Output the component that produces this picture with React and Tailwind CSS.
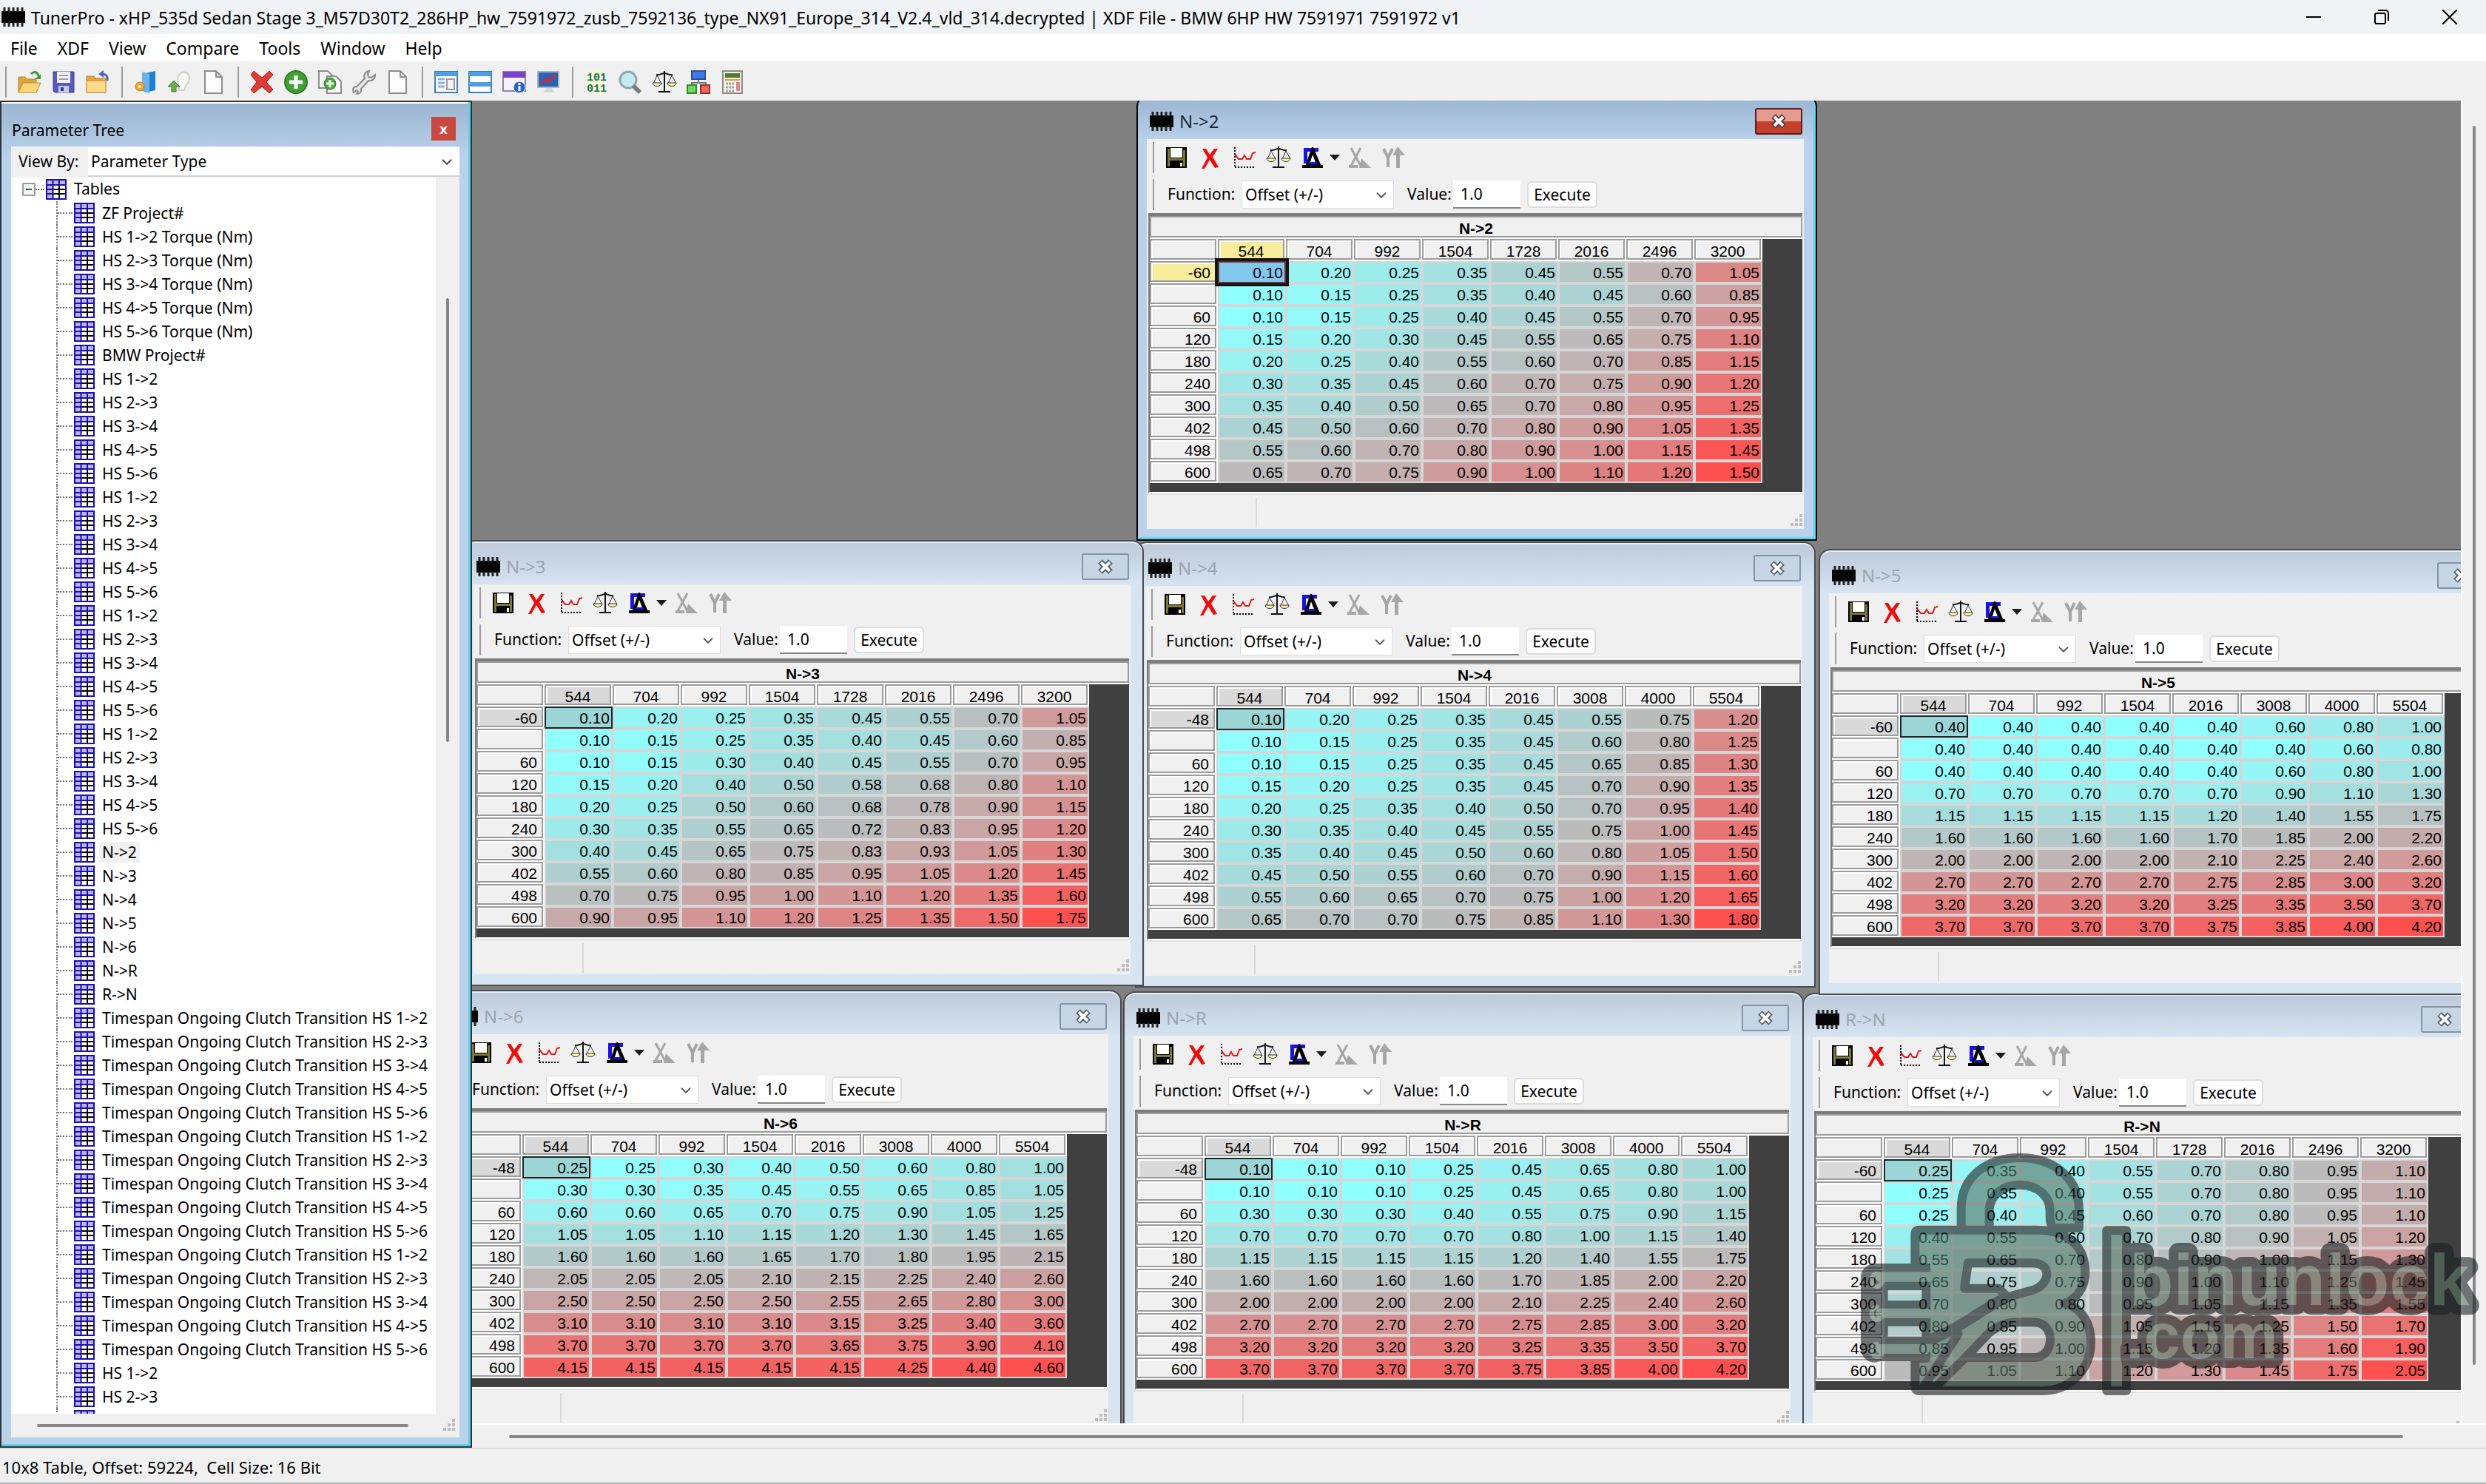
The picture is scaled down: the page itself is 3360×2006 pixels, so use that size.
import React, { useState } from "react";
import { ChevronDown } from "lucide-react";

const RPM_A = [544, 704, 992, 1504, 1728, 2016, 2496, 3200];
const RPM_B = [544, 704, 992, 1504, 2016, 3008, 4000, 5504];
const TORQUE = ["-60", "", "60", "120", "180", "240", "300", "402", "498", "600"];
const TORQUE_48 = ["-48", "", "60", "120", "180", "240", "300", "402", "498", "600"];

// one string per table row
const parseRows = (text) =>
  text
    .trim()
    .split("\n")
    .map((line) => line.trim().split(/\s+/));

// Painted from first to last, so the later ones lie on top
const tables = [
  {
    name: "R->N",
    place: "left-[1798px] top-[1206px]",
    cols: RPM_A,
    rows: TORQUE,
    values: parseRows(`
      0.25 0.35 0.40 0.55 0.70 0.80 0.95 1.10
      0.25 0.35 0.40 0.55 0.70 0.80 0.95 1.10
      0.25 0.40 0.45 0.60 0.70 0.80 0.95 1.10
      0.40 0.55 0.60 0.70 0.80 0.90 1.05 1.20
      0.55 0.65 0.70 0.80 0.90 1.00 1.15 1.30
      0.65 0.75 0.75 0.90 1.00 1.10 1.25 1.45
      0.70 0.80 0.80 0.95 1.05 1.15 1.35 1.55
      0.80 0.85 0.90 1.05 1.15 1.25 1.50 1.70
      0.85 0.95 1.00 1.15 1.20 1.35 1.60 1.90
      0.95 1.05 1.10 1.20 1.30 1.45 1.75 2.05`),
  },
  {
    name: "N->R",
    place: "left-[880px] top-[1204px]",
    cols: RPM_B,
    rows: TORQUE_48,
    values: parseRows(`
      0.10 0.10 0.10 0.25 0.45 0.65 0.80 1.00
      0.10 0.10 0.10 0.25 0.45 0.65 0.80 1.00
      0.30 0.30 0.30 0.40 0.55 0.75 0.90 1.15
      0.70 0.70 0.70 0.70 0.80 1.00 1.15 1.40
      1.15 1.15 1.15 1.15 1.20 1.40 1.55 1.75
      1.60 1.60 1.60 1.60 1.70 1.85 2.00 2.20
      2.00 2.00 2.00 2.00 2.10 2.25 2.40 2.60
      2.70 2.70 2.70 2.70 2.75 2.85 3.00 3.20
      3.20 3.20 3.20 3.20 3.25 3.35 3.50 3.70
      3.70 3.70 3.70 3.70 3.75 3.85 4.00 4.20`),
  },
  {
    name: "N->6",
    place: "left-[-42px] top-[1202px]",
    cols: RPM_B,
    rows: TORQUE_48,
    values: parseRows(`
      0.25 0.25 0.30 0.40 0.50 0.60 0.80 1.00
      0.30 0.30 0.35 0.45 0.55 0.65 0.85 1.05
      0.60 0.60 0.65 0.70 0.75 0.90 1.05 1.25
      1.05 1.05 1.10 1.15 1.20 1.30 1.45 1.65
      1.60 1.60 1.60 1.65 1.70 1.80 1.95 2.15
      2.05 2.05 2.05 2.10 2.15 2.25 2.40 2.60
      2.50 2.50 2.50 2.50 2.55 2.65 2.80 3.00
      3.10 3.10 3.10 3.10 3.15 3.25 3.40 3.60
      3.70 3.70 3.70 3.70 3.65 3.75 3.90 4.10
      4.15 4.15 4.15 4.15 4.15 4.25 4.40 4.60`),
  },
  {
    name: "N->5",
    place: "left-[1820px] top-[606px]",
    cols: RPM_B,
    rows: TORQUE,
    values: parseRows(`
      0.40 0.40 0.40 0.40 0.40 0.60 0.80 1.00
      0.40 0.40 0.40 0.40 0.40 0.40 0.60 0.80
      0.40 0.40 0.40 0.40 0.40 0.60 0.80 1.00
      0.70 0.70 0.70 0.70 0.70 0.90 1.10 1.30
      1.15 1.15 1.15 1.15 1.20 1.40 1.55 1.75
      1.60 1.60 1.60 1.60 1.70 1.85 2.00 2.20
      2.00 2.00 2.00 2.00 2.10 2.25 2.40 2.60
      2.70 2.70 2.70 2.70 2.75 2.85 3.00 3.20
      3.20 3.20 3.20 3.20 3.25 3.35 3.50 3.70
      3.70 3.70 3.70 3.70 3.75 3.85 4.00 4.20`),
  },
  {
    name: "N->4",
    place: "left-[896px] top-[596px]",
    cols: RPM_B,
    rows: TORQUE_48,
    values: parseRows(`
      0.10 0.20 0.25 0.35 0.45 0.55 0.75 1.20
      0.10 0.15 0.25 0.35 0.45 0.60 0.80 1.25
      0.10 0.15 0.25 0.35 0.45 0.65 0.85 1.30
      0.15 0.20 0.25 0.35 0.45 0.70 0.90 1.35
      0.20 0.25 0.35 0.40 0.50 0.70 0.95 1.40
      0.30 0.35 0.40 0.45 0.55 0.75 1.00 1.45
      0.35 0.40 0.45 0.50 0.60 0.80 1.05 1.50
      0.45 0.50 0.55 0.60 0.70 0.90 1.15 1.60
      0.55 0.60 0.65 0.70 0.75 1.00 1.20 1.65
      0.65 0.70 0.70 0.75 0.85 1.10 1.30 1.80`),
  },
  {
    name: "N->3",
    place: "left-[-12px] top-[594px]",
    cols: RPM_A,
    rows: TORQUE,
    values: parseRows(`
      0.10 0.20 0.25 0.35 0.45 0.55 0.70 1.05
      0.10 0.15 0.25 0.35 0.40 0.45 0.60 0.85
      0.10 0.15 0.30 0.40 0.45 0.55 0.70 0.95
      0.15 0.20 0.40 0.50 0.58 0.68 0.80 1.10
      0.20 0.25 0.50 0.60 0.68 0.78 0.90 1.15
      0.30 0.35 0.55 0.65 0.72 0.83 0.95 1.20
      0.40 0.45 0.65 0.75 0.83 0.93 1.05 1.30
      0.55 0.60 0.80 0.85 0.95 1.05 1.20 1.45
      0.70 0.75 0.95 1.00 1.10 1.20 1.35 1.60
      0.90 0.95 1.10 1.20 1.25 1.35 1.50 1.75`),
  },
  {
    name: "N->2",
    active: true,
    place: "left-[898px] top-[-8px]",
    cols: RPM_A,
    rows: TORQUE,
    values: parseRows(`
      0.10 0.20 0.25 0.35 0.45 0.55 0.70 1.05
      0.10 0.15 0.25 0.35 0.40 0.45 0.60 0.85
      0.10 0.15 0.25 0.40 0.45 0.55 0.70 0.95
      0.15 0.20 0.30 0.45 0.55 0.65 0.75 1.10
      0.20 0.25 0.40 0.55 0.60 0.70 0.85 1.15
      0.30 0.35 0.45 0.60 0.70 0.75 0.90 1.20
      0.35 0.40 0.50 0.65 0.70 0.80 0.95 1.25
      0.45 0.50 0.60 0.70 0.80 0.90 1.05 1.35
      0.55 0.60 0.70 0.80 0.90 1.00 1.15 1.45
      0.65 0.70 0.75 0.90 1.00 1.10 1.20 1.50`),
  },
];

const SHIFTS = ["1->2", "2->3", "3->4", "4->5", "5->6"];
const hs = SHIFTS.map((s) => `HS ${s}`);
const timespan = SHIFTS.map((s) => `Timespan Ongoing Clutch Transition HS ${s}`);
const treeItems = [
  "ZF Project#",
  ...SHIFTS.map((s) => `HS ${s} Torque (Nm)`),
  "BMW Project#",
  ...hs,
  ...hs,
  ...hs,
  ...hs,
  "N->2",
  "N->3",
  "N->4",
  "N->5",
  "N->6",
  "N->R",
  "R->N",
  ...timespan,
  ...timespan,
  ...timespan,
  ...hs.slice(0, 2),
  "",
];

// cyan at the lowest value, red at the highest
const heatColor = (value, min, max) => {
  const t = (value - min) / (max - min);
  const r = Math.round(144 + 111 * t);
  const g = Math.round(255 - 175 * t);
  return `rgb(${r}, ${g}, ${g})`;
};

/* ---------- icons ---------- */

const ChipIcon = () => (
  <svg viewBox="0 0 32 26" className="h-[26px] w-8 shrink-0" aria-hidden="true">
    <rect y="5" width="32" height="16" fill="#050505" />
    <path d="M4 0v6M10 0v6M16 0v6M22 0v6M28 0v6M4 20v6M10 20v6M16 20v6M22 20v6M28 20v6" stroke="#222" strokeWidth="3" />
  </svg>
);

const TableIcon = () => (
  <svg viewBox="0 0 28 28" className="size-7 shrink-0" aria-hidden="true">
    <rect x="1" y="1" width="26" height="26" fill="#fff" />
    <path d="M2 2h24v6H2zM2 2h7v24H2z" fill="#b9b5e6" />
    <path d="M10 14h16M10 20h16M18 9v17" stroke="#000" strokeWidth="2" />
    <path d="M1 1h26v26H1zM1 8h26M9.500 1v26M18 1v7M1 14h8M1 20h8" fill="none" stroke="#1a0db8" strokeWidth="2" />
  </svg>
);

const CrossGlyph = ({ dark }) => (
  <svg viewBox="0 0 24 20" className="h-5 w-6" aria-hidden="true">
    <path d="M5 3l14 14M19 3L5 17" stroke={dark} strokeWidth="8" />
    <path d="M6 4l12 12M18 4L6 16" stroke="#fff" strokeWidth="4" />
  </svg>
);

const Grip = () => (
  <svg viewBox="0 0 18 18" className="size-[18px]" aria-hidden="true">
    <path d="M12 0h4v4h-4zM6 6h4v4H6zM12 6h4v4h-4zM0 12h4v4H0zM6 12h4v4H6zM12 12h4v4h-4z" fill="#bcbcbc" />
  </svg>
);

const Scales = ({ pan = "#fdf6a8" }) => (
  <>
    <path d="M16 1v27M5 6c5 1 7-2 11-2s6 3 11 2" fill="none" stroke="#111" strokeWidth="2" />
    <path d="M8 30h16v-2H8z" fill="#111" />
    <path d="M6 7L1 18h11zM26 7l-5 11h11z" fill="none" stroke="#333" strokeWidth="1" />
    <path d="M0 17h12c0 6-12 6-12 0zM20 17h12c0 6-12 6-12 0z" fill={pan} stroke="#333" strokeWidth="1" />
  </>
);

const Page = ({ x = 4 }) => (
  <path d={`M${x} 1h15l8 8v22H${x}z M${x + 15} 1v8h8`} fill="#fdfdfd" stroke="#8d8d8d" strokeWidth="2" />
);

const mainIcons = {
  open: (
    <>
      <path d="M1 9h9l3 3h12v17H1z" fill="#d9a441" stroke="#b9832b" />
      <path d="M1 30l6-13h24l-6 13z" fill="#ffd477" stroke="#c08a2e" />
      <path d="M18 5c5-5 9-2 10 3" fill="none" stroke="#3c9a3c" strokeWidth="3" />
      <path d="M31 5v7h-8z" fill="#3c9a3c" />
    </>
  ),
  save: (
    <>
      <path d="M2 2h28v28H4l-2-2z" fill="#5b59bf" stroke="#413f92" strokeWidth="1" />
      <path d="M7 2h18v15H7z" fill="#f2f4fb" />
      <path d="M10 7h12M10 12h12" stroke="#9a9ab0" strokeWidth="2" />
      <path d="M9 21h14v9H9z" fill="#c7cbe8" />
      <path d="M12 23h4v5h-4z" fill="#3a388c" />
    </>
  ),
  close: (
    <>
      <path d="M1 8h10l3 3h13v19H1z" fill="#dfa548" stroke="#b9832b" />
      <path d="M1 14h26v16H1z" fill="#ffd98a" stroke="#c08a2e" />
      <path d="M29 14c1-6-2-9-7-9" fill="none" stroke="#5366b5" strokeWidth="3" />
      <path d="M24 0v10l-7-5z" fill="#5366b5" />
    </>
  ),
  book: (
    <>
      <path d="M15 4l14-3v26l-14 3z" fill="#1f7fd0" />
      <path d="M11 2l10 3v26l-10-3z" fill="#69b4ec" />
      <circle cx="8" cy="22" r="6" fill="#f6a42b" stroke="#c97a12" />
      <circle cx="8" cy="22" r="2" fill="#fff" />
    </>
  ),
  bulb: (
    <>
      <path d="M14 8c4-9 15-6 15 3 0 7-6 8-7 16h-7c1-7-4-12-1-19z" fill="#f7f7f4" stroke="#cfcfcf" strokeWidth="2" />
      <path d="M8 14l8 8h-5v7H5v-7H0z" fill="#6fae4f" stroke="#3f7d2a" strokeWidth="1" />
    </>
  ),
  page: <Page />,
  remove: (
    <path d="M5 1l11 9L26 1l5 5-9 10 9 10-5 5-10-9-11 9-4-5 8-10-8-10z" fill="#dd3b33" stroke="#a3221d" strokeWidth="1" />
  ),
  add: (
    <>
      <circle cx="16" cy="16" r="15" fill="#41a137" stroke="#2b7a22" strokeWidth="2" />
      <path d="M16 7v18M7 16h18" stroke="#fff" strokeWidth="5" />
    </>
  ),
  copy: (
    <>
      <path d="M1 1h12l6 6v17H1z" fill="#f6f6f6" stroke="#8d8d8d" strokeWidth="2" />
      <path d="M12 8h12l7 7v16H12z" fill="#fff" stroke="#8d8d8d" strokeWidth="2" />
      <circle cx="16" cy="18" r="8" fill="#49a83e" stroke="#2b7a22" />
      <path d="M16 13v10M11 18h10" stroke="#fff" strokeWidth="3" />
    </>
  ),
  wrench: (
    <path
      d="M23 1c-6 1-8 6-6 10L6 22c-5 0-6 4-4 8l4-3 2 2-2 3c5 0 7-3 6-7l10-11c5 1 9-2 9-8l-5 4-4-1-1-4z"
      fill="#e6e6e6"
      stroke="#8a8a8a"
      strokeWidth="2"
    />
  ),
  page2: <Page />,
  panels: (
    <>
      <path d="M1 2h30v28H1z" fill="#fff" stroke="#3b7fbd" strokeWidth="2" />
      <path d="M1 2h30v6H1z" fill="#4f9fe0" />
      <path d="M5 12h9M5 17h9M5 22h9" stroke="#7fb2dd" strokeWidth="3" />
      <path d="M17 12h10v14H17z" fill="#f3f3f3" stroke="#9a9a9a" strokeWidth="2" />
    </>
  ),
  rows: (
    <>
      <path d="M1 2h30v28H1z" fill="#fff" stroke="#3b7fbd" strokeWidth="2" />
      <path d="M1 2h30v6H1zM1 16h30v6H1z" fill="#4f9fe0" />
    </>
  ),
  info: (
    <>
      <path d="M1 2h30v26H1z" fill="#f6f2fb" stroke="#8d83a8" strokeWidth="2" />
      <path d="M1 2h30v8H1z" fill="#7d3fd0" />
      <circle cx="23" cy="23" r="8" fill="#2a64c5" stroke="#fff" />
      <path d="M23 17v3M23 21v7" stroke="#fff" strokeWidth="3" />
    </>
  ),
  monitor: (
    <>
      <path d="M2 2h28v21H2z" fill="#2c62b4" stroke="#aab6c8" strokeWidth="2" />
      <path d="M7 18l6-6 4 3 8-9" fill="none" stroke="#e0212b" strokeWidth="3" />
      <path d="M9 30h16l-5-6h-6z" fill="#cfd3da" />
    </>
  ),
  binary: (
    <>
      <path d="M3 0h20l5 6v26H3z" fill="#f8f6cf" />
      <text x="3" y="14" fontFamily="Liberation Mono, monospace" fontSize="15" fontWeight="700" fill="#16706a">101</text>
      <text x="3" y="29" fontFamily="Liberation Mono, monospace" fontSize="15" fontWeight="700" fill="#16706a">011</text>
    </>
  ),
  search: (
    <>
      <circle cx="13" cy="13" r="11" fill="#c4e9f3" stroke="#8fa7b0" strokeWidth="3" />
      <path d="M20 21l9 9" stroke="#7b7b7b" strokeWidth="6" />
    </>
  ),
  scales: <Scales />,
  tree: (
    <>
      <path d="M16 12v5M7 21v-4h19v4" fill="none" stroke="#777" strokeWidth="2" />
      <path d="M7 1h18v11H7z" fill="#3f7be0" stroke="#2a4f9c" strokeWidth="2" />
      <path d="M1 20h12v11H1z" fill="#6fd567" stroke="#2f8b29" strokeWidth="2" />
      <path d="M19 20h12v11H19z" fill="#e56a63" stroke="#a12c26" strokeWidth="2" />
    </>
  ),
  calc: (
    <>
      <path d="M3 1h26v30H3z" fill="#f5f3ec" stroke="#8d8a80" strokeWidth="2" />
      <path d="M6 4h20v6H6z" fill="#4e7d36" />
      <path d="M6 13h20" stroke="#e69a3c" strokeWidth="2" />
      <path d="M7 18h11M7 23h11M7 28h11" stroke="#a5a5a5" strokeWidth="3" strokeDasharray="3 1" />
      <path d="M21 16h5v12h-5z" fill="#dc8791" />
    </>
  ),
};

const tableIcons = {
  save: (
    <>
      <path d="M2 2h28v28H2z" fill="#000" />
      <path d="M4 4h3v24H4zM25 6h3v22h-3zM7 17h18v3H7z" fill="#7d7836" />
      <path d="M8 3h16v13H8z" fill="#fff" />
      <path d="M21 23h3v5h-3z" fill="#fff" />
    </>
  ),
  discard: <path d="M5 4l5 0 5 8 6-8h5l-7 11 8 14-5 1-7-11-7 12H4l8-15z" fill="#ee0d0d" />,
  graph: (
    <>
      <path d="M3 2v28M3 29h28" fill="none" stroke="#000" strokeWidth="2" strokeDasharray="2 2" />
      <path d="M3 12l5 6h5l3-5 3 5h5l3-8 4-1" fill="none" stroke="#e01a1a" strokeWidth="2" />
    </>
  ),
  compare: <Scales />,
  delta: (
    <>
      <path d="M4 3h20v5H9v16H4z" fill="#1a10e0" />
      <path d="M15 2L6 28h22L17 2z" fill="#000" />
      <path d="M2 26h28v4H2z" fill="#000" />
      <path d="M16 12l-4 13h9z" fill="#fff" />
      <path d="M11 22h11v3H10z" fill="#1a10e0" />
    </>
  ),
};

const tableIconsOff = {
  "Edit X axis": (
    <>
      <path d="M5 3l13 24M18 3L5 27" fill="none" stroke="#a6a6a6" strokeWidth="3" />
      <path d="M2 26h12v4H2zM19 17l13 13H16z" fill="#a6a6a6" />
    </>
  ),
  "Edit Y axis": (
    <>
      <path d="M3 4l6 12 6-12M9 15v14" fill="none" stroke="#a6a6a6" strokeWidth="4" />
      <path d="M22 1l10 12h-7v17h-5V13h-5z" fill="#a6a6a6" />
    </>
  ),
};

const IconButton = ({ label, children }) => (
  <button type="button" aria-label={label} className="flex h-[42px] w-[46px] items-center justify-center">
    <svg viewBox="0 0 32 32" className="size-8 overflow-visible" aria-hidden="true">
      {children}
    </svg>
  </button>
);

/* ---------- main window bars ---------- */

const TitleBar = () => (
  <header className="flex h-[46px] shrink-0 items-center bg-[#eff3f6] pr-[3px] pl-[2px]">
    <ChipIcon />
    <h1 className="ml-2 truncate pt-[2px] text-[23px] leading-8">
      TunerPro - xHP_535d Sedan Stage 3_M57D30T2_286HP_hw_7591972_zusb_7592136_type_NX91_Europe_314_V2.4_vld_314.decrypted | XDF File - BMW 6HP HW 7591971 7591972 v1
    </h1>
    <div className="ml-auto flex">
      <button type="button" aria-label="Minimize" className="flex w-[92px] justify-center">
        <svg viewBox="0 0 20 20" className="size-5">
          <path d="M0 10h20" stroke="#000" strokeWidth="2" />
        </svg>
      </button>
      <button type="button" aria-label="Restore" className="flex w-[92px] justify-center">
        <svg viewBox="0 0 20 20" className="size-5" fill="none" stroke="#000" strokeWidth="2">
          <rect x="1" y="5" width="14" height="14" rx="2" />
          <path d="M5 1h10a4 4 0 0 1 4 4v10" />
        </svg>
      </button>
      <button type="button" aria-label="Close" className="flex w-[92px] justify-center">
        <svg viewBox="0 0 20 20" className="size-5">
          <path d="M0 0l20 20M20 0L0 20" stroke="#000" strokeWidth="2" />
        </svg>
      </button>
    </div>
  </header>
);

const MenuBar = () => (
  <nav className="flex h-9 shrink-0 items-center gap-[27px] bg-white pt-[2px] pl-[14px] text-[23px] leading-8">
    {["File", "XDF", "View", "Compare", "Tools", "Window", "Help"].map((name) => (
      <button type="button" key={name}>
        {name}
      </button>
    ))}
  </nav>
);

const toolGroups = [
  ["open", "save", "close"],
  ["book", "bulb", "page"],
  ["remove", "add", "copy", "wrench", "page2"],
  ["panels", "rows", "info", "monitor"],
  ["binary", "search", "scales", "tree", "calc"],
];

const ToolBar = () => (
  <div className="flex h-[54px] shrink-0 items-center border-t-2 border-[#f6f6f6] pt-[2px] pl-[7px]">
    {toolGroups.map((group, index) => (
      <div key={index} className="mr-[9px] flex border-l-2 border-[#9c9c9c] pl-2">
        {group.map((name) => (
          <IconButton key={name} label={name}>
            {mainIcons[name]}
          </IconButton>
        ))}
      </div>
    ))}
  </div>
);

/* ---------- parameter tree ---------- */

const ParameterTree = () => {
  const [viewBy, setViewBy] = useState("Parameter Type");

  return (
    <aside className="flex w-[638px] shrink-0 flex-col border-2 border-[#2b3338] bg-[#b9d1ea] bg-linear-to-b from-[#9ab5d1] to-[#b9d1ea] to-4% shadow-[inset_-3px_-3px_0_#5fcfe6,inset_0_2px_0_#fff]">
      <div className="flex h-[60px] shrink-0 items-end justify-between pr-5 pb-2 pl-[14px]">
        <h2 className="text-[21px] leading-7">Parameter Tree</h2>
        <button
          type="button"
          aria-label="Close parameter tree"
          className="flex h-8 w-[33px] items-center justify-center bg-[#c9483f] text-[18px] leading-none font-bold text-white"
        >
          x
        </button>
      </div>

      <div className="mr-[15px] mb-3 ml-[13px] flex min-h-0 flex-1 flex-col bg-[#f0f0f0]">
        <div className="flex h-[42px] shrink-0 items-center pl-[10px] text-[21px]">
          <label htmlFor="view-by" className="w-[94px]">
            View By:
          </label>
          <div className="relative flex-1">
            <select
              id="view-by"
              value={viewBy}
              onChange={(e) => setViewBy(e.target.value)}
              className="h-10 w-full appearance-none border-b-2 border-[#d0d0d0] bg-white pt-[2px] pl-[4px]"
            >
              <option>Parameter Type</option>
              <option>Category</option>
            </select>
            <ChevronDown className="pointer-events-none absolute top-[9px] right-[6px] size-[22px] text-[#444]" strokeWidth={2} />
          </div>
        </div>

        <div className="flex min-h-0 flex-1">
          <div className="flex-1 overflow-hidden bg-white text-[21px]">
            <div className="flex h-8 items-center">
              <span className="ml-[15px] flex size-[18px] items-center justify-center rounded-[2px] border-2 border-[#9a9a9a] bg-[#f6f6f6]">
                <span className="w-2 border-t-2 border-[#3a4a8a]" />
              </span>
              <span className="mr-[2px] w-3 border-t-2 border-dotted border-[#777]" />
              <TableIcon />
              <span className="ml-[10px]">Tables</span>
            </div>
            <ul>
              {treeItems.map((item, index) => (
                <li key={index} className="flex h-8 items-center whitespace-nowrap">
                  <span className="ml-[61px] flex h-8 w-6 items-center border-l-2 border-dotted border-[#777]">
                    <span className="w-5 border-t-2 border-dotted border-[#777]" />
                  </span>
                  <TableIcon />
                  <span className={`ml-[6px] px-1 leading-7 ${item === "N->2" ? "bg-[#f0f0f0]" : ""}`}>{item}</span>
                </li>
              ))}
            </ul>
          </div>
          <div className="flex w-8 shrink-0 justify-center pt-[163px]">
            <div className="h-[600px] w-1 rounded bg-[#868686]" />
          </div>
        </div>

        <div className="flex h-8 shrink-0 items-center justify-between pr-1 pl-[35px]">
          <div className="h-1 w-[502px] rounded bg-[#868686]" />
          <Grip />
        </div>
      </div>
    </aside>
  );
};

/* ---------- table windows ---------- */

const headCell = "h-[30px] w-[92px] border-r-2 border-b-2 border-white p-0 font-normal shadow-[inset_0_0_0_2px_#9b9b9b,inset_4px_4px_0_#fff]";

const DataGrid = ({ table }) => {
  const numbers = table.values.flat().map(Number);
  const min = Math.min(...numbers);
  const max = Math.max(...numbers);
  const picked = table.active ? "bg-[#f6ec9b]" : "bg-[#d9d9d9]";
  const pickedCell = table.active
    ? "bg-[#83c8ee] outline-4 outline-[#141414] border-[#6b3030]"
    : "bg-[#9cd5d5] border-[#15292b]";

  return (
    <div className="mx-[2px] border-t-4 border-b-2 border-l-2 border-t-[#7c7c7c] border-b-white border-l-[#7c7c7c] bg-[#404040] pb-3 font-['Liberation_Sans',Arial,sans-serif] text-[21px] leading-6">
      <div className="h-[31px] border-b-2 border-white bg-[#f0f0f0] pt-[6px] text-center leading-[22px] font-bold shadow-[inset_0_0_0_2px_#9b9b9b]">
        {table.name}
      </div>
      <table className="w-[828px] table-fixed border-separate border-spacing-0" aria-label={table.name}>
        <thead>
          <tr>
            <td className={`${headCell} bg-[#f0f0f0]`} />
            {table.cols.map((col, c) => (
              <th key={col} scope="col" className={`${headCell} pt-[6px] leading-[22px] ${c === 0 ? picked : "bg-[#f0f0f0]"}`}>
                {col}
              </th>
            ))}
          </tr>
        </thead>
        <tbody>
          {table.values.map((row, r) => (
            <tr key={r}>
              <th scope="row" className={`${headCell} pt-1 pr-2 text-right ${r === 0 ? picked : "bg-[#f0f0f0]"}`}>
                {table.rows[r]}
              </th>
              {row.map((value, c) => {
                const isPicked = r === 0 && c === 0;
                return (
                  <td
                    key={c}
                    className={`h-[30px] border-2 p-0 pt-[2px] pr-[2px] text-right ${
                      isPicked ? pickedCell : "border-[#d6d6d6]"
                    }`}
                    style={isPicked ? undefined : { backgroundColor: heatColor(Number(value), min, max) }}
                  >
                    {value}
                  </td>
                );
              })}
            </tr>
          ))}
        </tbody>
      </table>
    </div>
  );
};

const TableWindow = ({ table }) => {
  const [func, setFunc] = useState("Offset (+/-)");
  const [amount, setAmount] = useState("1.0");
  const id = table.name.replace("->", "-");

  return (
    <section
      className={`absolute w-[920px] rounded-t-2xl border-2 pr-4 pb-[14px] pl-3 ${table.place} ${
        table.active
          ? "border-black bg-[#b9d1ea] bg-linear-to-b from-[#99b4d1] to-[#b9d1ea] to-10% shadow-[inset_-3px_-3px_0_#5fd8ee]"
          : "border-[#4a4d50] bg-[#d7e4f2] bg-linear-to-b from-[#bccad9] to-[#d7e4f2] to-10% shadow-[inset_0_2px_0_#e8f0f8]"
      }`}
    >
      <div className="flex h-[58px] items-center pt-[10px] pr-[2px] pl-1">
        <ChipIcon />
        <h2 className={`ml-2 text-[24px] leading-8 ${table.active ? "text-[#1c2a3a]" : "text-[#9aa5b0]"}`}>{table.name}</h2>
        <button
          type="button"
          aria-label={`Close ${table.name}`}
          className={`ml-auto flex h-9 w-16 items-center justify-center rounded-[3px] border-2 ${
            table.active
              ? "border-[#5e1a1e] bg-linear-to-b from-[#e39b90] from-50% to-[#c4402a] to-50%"
              : "border-[#8494a6] bg-[#c6d5e4]"
          }`}
        >
          <CrossGlyph dark={table.active ? "#5c3a40" : "#556070"} />
        </button>
      </div>

      <div className="bg-[#f0f0f0]">
        <div className="flex h-[50px] items-start pt-1">
          <span className="ml-2 h-[42px] w-[9px] border-l-2 border-[#9c9c9c]" />
          {Object.keys(tableIcons).map((name) => (
            <IconButton key={name} label={name}>
              {tableIcons[name]}
            </IconButton>
          ))}
          <button type="button" aria-label="More deltas" className="flex h-[42px] w-[17px] items-center">
            <svg viewBox="0 0 14 8" className="h-2 w-[14px]">
              <path d="M0 0h14L7 8z" fill="#1d1d1d" />
            </svg>
          </button>
          {Object.keys(tableIconsOff).map((name) => (
            <IconButton key={name} label={name}>
              {tableIconsOff[name]}
            </IconButton>
          ))}
        </div>

        <div className="flex h-[50px] items-center text-[21px]">
          <span className="ml-2 h-[42px] w-5 border-l-2 border-[#9c9c9c]" />
          <label htmlFor={`func-${id}`} className="w-[100px]">
            Function:
          </label>
          <div className="relative w-[206px]">
            <select
              id={`func-${id}`}
              value={func}
              onChange={(e) => setFunc(e.target.value)}
              className="h-[38px] w-full appearance-none border border-[#dcdcdc] bg-white pt-[2px] pl-1"
            >
              <option>Offset (+/-)</option>
              <option>Multiply</option>
              <option>Fill</option>
            </select>
            <ChevronDown className="pointer-events-none absolute top-[9px] right-[6px] size-[22px] text-[#555]" strokeWidth={2} />
          </div>
          <label htmlFor={`value-${id}`} className="ml-[18px] w-[62px]">
            Value:
          </label>
          <input
            id={`value-${id}`}
            type="text"
            value={amount}
            onChange={(e) => setAmount(e.target.value)}
            className="h-[38px] w-[91px] border-b-2 border-[#868686] bg-white pl-[10px]"
          />
          <button type="button" className="ml-[9px] h-9 w-[95px] rounded-md border-2 border-[#dcdcdc] bg-[#fdfdfd] leading-7">
            Execute
          </button>
        </div>

        <DataGrid table={table} />

        <div className="flex h-12 items-end justify-between border-t-2 border-[#e0e0e0] pb-[2px]">
          <span className="h-10 w-[149px] border-r-2 border-[#d9d9d9]" />
          <Grip />
        </div>
      </div>
    </section>
  );
};

const Workspace = () => (
  <div className="flex min-w-0 flex-1 flex-col bg-[#f0f0f0]">
    <div className="flex min-h-0 flex-1">
      <main className="relative flex-1 overflow-hidden bg-[#808080]">
        {tables.map((table) => (
          <TableWindow key={table.name} table={table} />
        ))}
      </main>
      <div className="flex w-[34px] justify-center border-l-2 border-white pt-[34px] pb-[79px]">
        <div className="w-1 rounded bg-[#868686]" />
      </div>
    </div>
    <div className="flex h-[33px] items-center border-t-2 border-white pr-28 pl-[50px]">
      <div className="h-1 flex-1 rounded bg-[#868686]" />
    </div>
  </div>
);

// Padlock shaped like a B with chip pins, next to the site name
const Watermark = () => (
  <svg
    viewBox="0 0 2580 1080"
    className="pointer-events-none absolute right-0 bottom-[106px] h-[360px] w-[860px]"
    aria-label="binunlock.com"
  >
    <g opacity="0.6" fill="#5b7566" stroke="#1a1f1f" strokeWidth="36" strokeLinejoin="round" strokeLinecap="round">
      <path d="M110 558h180" strokeWidth="108" />
      <path d="M110 706h180" strokeWidth="104" />
      <path d="M110 850h180" strokeWidth="100" />
      <path d="M100 560v290" strokeWidth="110" />
      <path d="M180 632h130M180 780h130" stroke="none" />
      <path d="M452 370v-90C452 150 560 75 690 75s240 75 240 215v70H830c-20-10-18-40-18-70 0-60-52-105-122-105s-124 45-124 105v80z" />
      <path
        fillRule="evenodd"
        d="M310 520h-45V385q0-17 17-17h478c140 0 195 82 195 172 0 60-35 110-85 125 70 15 108 85 108 155 0 110-78 200-198 200H282q-17 0-17-17V888h45z
          M480 502h260c90 0 70 98-10 113l-90 25-35-35H465z
          M690 742h55c95 0 85 143 5 143H470l90-95c50-45 90-48 130-48z"
      />
      <path d="M640 640C560 670 450 770 320 815" fill="none" strokeWidth="44" />
      <path d="M440 790L300 1003h50L470 885" strokeWidth="36" fill="none" />
      <path d="M125 558h205M125 706h205M125 850h205" stroke="#5b7566" strokeWidth="40" />
      <path d="M110 545a22 26 0 1 0 22 30M110 680a22 26 0 1 0 22 34M110 830a22 26 0 1 0 22 34" fill="none" stroke="#5b7566" strokeWidth="18" />
      <rect x="1042" y="370" width="80" height="650" />
      <g fontFamily="Liberation Sans, Arial, sans-serif" fontWeight="700" strokeWidth="78" paintOrder="stroke">
        <text x="1134" y="672" fontSize="292">binunlock</text>
        <text x="1120" y="888" fontSize="264">.com</text>
      </g>
    </g>
  </svg>
);

const App = () => {
  return (
    <div className="relative flex h-screen flex-col overflow-hidden bg-[#f0f0f0] font-['Noto_Sans','Open_Sans',sans-serif] text-black">
      <TitleBar />
      <MenuBar />
      <ToolBar />
      <div className="flex min-h-0 flex-1">
        <ParameterTree />
        <Workspace />
      </div>
      <footer className="flex h-[49px] shrink-0 items-center border-t-2 border-b-2 border-t-[#dcdcdc] border-b-[#a9b1b3] pt-[2px] pl-[3px] text-[22px] leading-8 whitespace-pre">
        10x8 Table, Offset: 59224,{"  "}Cell Size: 16 Bit
      </footer>
      <Watermark />
    </div>
  );
};

export default App;
